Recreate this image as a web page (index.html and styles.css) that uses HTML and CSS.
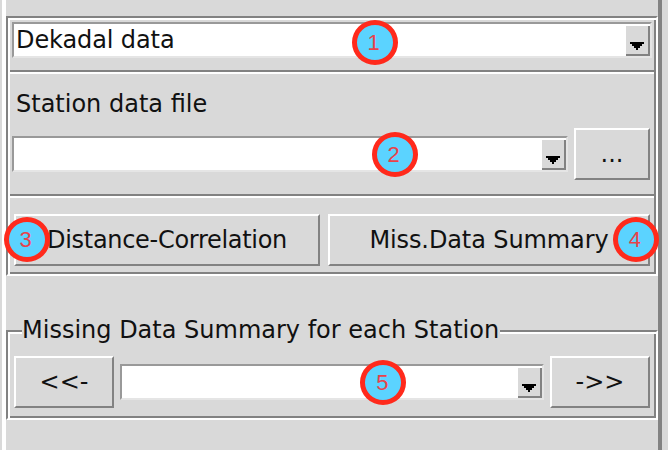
FILE: index.html
```html
<!DOCTYPE html>
<html lang="en">
<head>
<meta charset="utf-8">
<title>Dekadal data</title>
<link rel="stylesheet" href="styles.css">
</head>
<body>
<main class="pane">
  <section class="group">
    <div class="row row-period">
      <div class="combo"><span class="value t-period">Dekadal data</span><span class="drop"><svg width="14" height="8" shape-rendering="crispEdges"><path d="M0 0H14V2H12V4H10V6H8V8H6V6H4V4H2V2H0Z"/></svg></span></div>
    </div>
    <div class="row row-file">
      <div class="label"><span class="t-file">Station data file</span></div>
      <div class="file-line">
        <div class="combo"><span class="value"></span><span class="drop"><svg width="14" height="8" shape-rendering="crispEdges"><path d="M0 0H14V2H12V4H10V6H8V8H6V6H4V4H2V2H0Z"/></svg></span></div>
        <div class="button browse"><span>...</span></div>
      </div>
    </div>
    <div class="row row-actions">
      <div class="button distance"><span class="t-distance">Distance-Correlation</span></div>
      <div class="button summary"><span class="t-summary">Miss.Data Summary</span></div>
    </div>
  </section>
  <section class="group stations">
    <h2 class="legend"><span>Missing Data Summary for each Station</span></h2>
    <div class="button step"><span>&lt;&lt;-</span></div>
    <div class="combo"><span class="value"></span><span class="drop"><svg width="14" height="8" shape-rendering="crispEdges"><path d="M0 0H14V2H12V4H10V6H8V8H6V6H4V4H2V2H0Z"/></svg></span></div>
    <div class="button step"><span>-&gt;&gt;</span></div>
  </section>
</main>
<span class="marker m1">1</span>
<span class="marker m2">2</span>
<span class="marker m3">3</span>
<span class="marker m4">4</span>
<span class="marker m5">5</span>
</body>
</html>
```
FILE: styles.css
```css
* { box-sizing: border-box; }
body {
  margin: 0;
  width: 668px;
  height: 450px;
  overflow: hidden;
  position: relative;
  background: #d9d9d9;
  color: #111;
  font: 24px/28px "DejaVu Sans", sans-serif;
  white-space: nowrap;
}
.pane {
  width: 660px;
  height: 450px;
  margin-left: 2px;
  padding-top: 16px;
  border-left: 4px solid #fff;
  border-right: 4px solid #828282;
}
.group {
  width: 652px;
  height: 260px;
  padding: 2px;
  border: 2px solid;
  border-color: #828282 #fff #fff #828282;
  box-shadow: inset 2px 2px #fff, inset -2px -2px #828282;
}
.row { border-bottom: 2px solid #fff; box-shadow: inset 0 -2px #828282; }
.row-period { height: 54px; padding: 2px 2px 0; }
.row-file { height: 124px; padding: 16px 2px 0; }
.row-actions { display: flex; gap: 8px; padding: 16px 4px 0; border: 0; box-shadow: none; }
.label { height: 38px; padding-left: 4px; }
.file-line { display: flex; gap: 6px; }
.file-line .combo { width: 556px; margin-top: 8px; }
.combo {
  display: flex;
  justify-content: space-between;
  height: 36px;
  background: #fff;
  border: 2px solid;
  border-color: #999 #e5e5e5 #e5e5e5 #999;
}
.value { padding-left: 2px; line-height: 32px; letter-spacing: -0.1px; }
.drop {
  width: 24px;
  height: 30px;
  margin-top: 2px;
  padding: 16px 0 0 4px;
  background: #d9d9d9;
  border: solid #828282;
  border-width: 0 2px 2px 0;
  line-height: 0;
}
.button {
  height: 52px;
  border: 2px solid;
  border-color: #fff #828282 #828282 #fff;
  text-align: center;
  line-height: 48px;
}
.browse { width: 76px; }
.distance { width: 306px; }
.t-distance { letter-spacing: -0.3px; }
.summary { width: 322px; }
.t-summary { letter-spacing: -0.1px; }
.stations {
  position: relative;
  display: flex;
  gap: 6px;
  height: 90px;
  margin-top: 54px;
  padding: 24px 6px 0;
}
.stations .combo { width: 424px; margin-top: 8px; }
.step { width: 100px; }
.legend {
  position: absolute;
  left: 14px;
  top: -17px;
  width: 478px;
  height: 30px;
  margin: 0;
  background: #d9d9d9;
  font-size: 24px;
  font-weight: 400;
  line-height: 30px;
}
.marker {
  position: absolute;
  width: 46px;
  height: 44.5px;
  border: 5px solid #ff2a1c;
  border-radius: 50%;
  background: #5bd3ff;
  color: #e8424a;
  font: 22px/36px "Liberation Sans", Arial, sans-serif;
  text-align: center;
  padding-right: 2px;
}
.m1 { left: 351.5px; top: 20.2px; }
.m2 { left: 371.5px; top: 132.2px; }
.m3 { left: 3.5px; top: 217.2px; }
.m4 { left: 612.8px; top: 217.2px; }
.m5 { left: 360.4px; top: 360.2px; }
```
